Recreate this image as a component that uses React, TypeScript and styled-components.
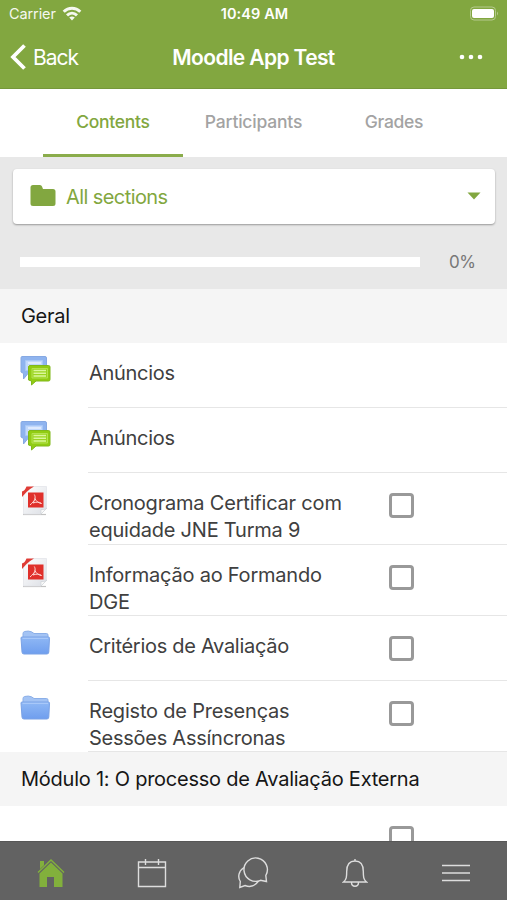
import React from "react";
import styled, { createGlobalStyle } from "styled-components";

const Global = createGlobalStyle`
  * { box-sizing: border-box; }
  body { margin: 0; background: #fff; font-family: Inter, "Liberation Sans", sans-serif; }
`;

const Screen = styled.div`
  width: 507px; height: 900px; overflow: hidden;
  display: flex; flex-direction: column; background: #fff;
`;
const Header = styled.header`
  height: 89px; flex: none; background: #82a740; color: #fff;
  border-bottom: 1px solid #75983a; display: flex; flex-direction: column;
`;
const StatusBar = styled.div`
  height: 27px; display: grid; grid-template-columns: 1fr auto 1fr; align-items: center;
  padding: 0 7px 0 9px; font-size: 14.5px;
`;
const Carrier = styled.div`
  display: flex; align-items: center; gap: 6px; opacity: .92;
`;
const Label = styled.span<{ $ls?: number }>`
  letter-spacing: ${p => p.$ls ?? 0}px; white-space: nowrap;
`;
const Clock = styled.div`font-weight: 600; font-size: 14.5px;`;
const Battery = styled.div`display: flex; justify-content: flex-end;`;
const NavBar = styled.div`
  height: 60px; display: grid; grid-template-columns: 1fr auto 1fr; align-items: center;
  padding: 0 24px 0 10px;
`;
const Back = styled.div`display: flex; align-items: center; gap: 7px; font-size: 21px;`;
const Title = styled.h1`margin: 0; font-size: 21px; font-weight: 600; padding-left: 14px;`;
const More = styled.div`display: flex; justify-content: flex-end;`;

const Tabs = styled.nav`
  height: 68px; flex: none; display: grid; grid-template-columns: repeat(3, 140.5px);
  justify-content: center;
`;
const Tab = styled.div<{ $active?: boolean }>`
  display: flex; align-items: center; justify-content: center; height: 68px;
  font-size: 17.5px; font-weight: 500;
  color: ${p => (p.$active ? "#82a740" : "#a3a3a3")};
  border-bottom: 3px solid ${p => (p.$active ? "#8aac4b" : "transparent")};
`;

const Controls = styled.section`
  height: 132px; flex: none; background: #e8e8e8; padding: 12px 12px 0 13px;
`;
const Selector = styled.div`
  height: 55px; background: #fff; border-radius: 4px; box-shadow: 0 1px 2px rgba(0,0,0,.35);
  display: flex; align-items: center; padding: 0 14px 2px 17px; color: #82a740; font-size: 20px;
`;
const SelectorText = styled.div`flex: 1; padding: 2px 0 0 10px;`;
const Progress = styled.div`
  display: flex; align-items: center; height: 76px; padding-left: 7px; color: #777; font-size: 17px;
`;
const Track = styled.div`width: 400px; height: 10px; background: #fff; margin-right: 29px;`;

const SectionTitle = styled.h2`
  margin: 0; flex: none; height: 54px; background: #f5f5f5; padding: 0 21px;
  display: flex; align-items: center; font-size: 20px; font-weight: 400; color: #161616;
`;
const List = styled.div`display: flex; flex-direction: column; flex: none;`;
const Row = styled.div<{ $h: number }>`
  height: ${p => p.$h}px; flex: none; display: flex; padding-left: 20px; overflow: hidden;
`;
const IconCell = styled.div`width: 68px; padding-top: 12px; flex: none;`;
const RowBody = styled.div`
  flex: 1; display: flex; border-bottom: 1px solid #e6e6e6; padding: 17px 0 0 1px;
`;
const RowText = styled.div`
  width: 300px; font-size: 20px; line-height: 27px; color: #404040; 
  display: flex; flex-direction: column;
`;
const Check = styled.div`
  width: 25px; height: 25px; border: 3px solid #999; border-radius: 4px; margin-top: 3px;
`;
const Content = styled.main`flex: 1; min-height: 0; overflow: hidden; display: flex; flex-direction: column;`;
const TabBar = styled.footer`
  height: 59px; flex: none; background: #626262; display: grid; grid-template-columns: repeat(5, 1fr);
  place-items: center; padding-top: 4px; border-top: 1px solid #575757;
`;

const Forum = () => (
  <svg width="32" height="32" viewBox="0 0 32 32">
    <path d="M2 1.500h23q1.500 0 1.500 1.500v14q0 1.500-1.500 1.500H8L3.500 24v-5.500L1 17V3q0-1.500 1-1.500z" fill="#8fb4ef" stroke="#86a9e3" />
    <path d="M5.500 5.500h17v10h-17z" fill="#c1d8fb" stroke="#a8c8f7" />
    <path d="M8 8h13M8 11h13M8 14h13" stroke="#e7f0ff" strokeWidth="1.500" />
    <path d="M10 10.500h18.500q1.500 0 1.500 1.500v12.500q0 1.500-1.500 1.500H16l-4.500 4v-4L8.500 25V12q0-1.500 1.500-1.500z" fill="#91cc12" stroke="#80b81b" />
    <path d="M12 13.500h15.500v9.500H12z" fill="#9bd420" stroke="#b4e250" />
    <path d="M13.500 15.500H26M13.500 18.300H26M13.500 21H26" stroke="#dcf79c" strokeWidth="1.500" />
  </svg>
);
const Pdf = () => (
  <svg width="32" height="32" viewBox="0 0 32 32">
    <defs><linearGradient id="paper" x1="0" y1="0" x2="1" y2="1">
      <stop offset="0" stopColor="#fff" /><stop offset="1" stopColor="#dcdfe5" />
    </linearGradient></defs>
    <path d="M3 29.500h23" stroke="#c2c2c2" strokeWidth="1.200" />
    <path d="M12 1.500h14.500V23l-5.500 6H3.500V10z" fill="url(#paper)" stroke="#e3e5ea" strokeWidth=".8" />
    <path d="M21 29v-4.500q3 1 6-1.500z" fill="#fafafa" stroke="#cfd2d7" strokeWidth=".7" />
    <path d="M6.500 1.500H14Q9.500 4 6.500 7L2 12V6.500q2.500-1 3.300-2.500z" fill="#df3c36" />
    <rect x="8" y="7.500" width="15.500" height="15" fill="#e0302b" />
    <path d="M14.300 9.500c1.700 3 1 6-4.300 10.500M15.500 14.500c-1.500 1.500-2 2.500-2.500 3.500 3-1 6-1.500 8.500.5M15 13.500c1 2.500 3 4.500 6.500 5" fill="none" stroke="#ffd9d5" strokeWidth="1" />
  </svg>
);
const Folder = () => (
  <svg width="32" height="34" viewBox="0 -1.500 32 34">
    <defs><linearGradient id="folder" x1="0" y1="0" x2="0" y2="1">
      <stop offset="0" stopColor="#8fb8f5" /><stop offset="1" stopColor="#6f9eee" />
    </linearGradient></defs>
    <path d="M3 9V4q0-1.500 1.500-2 4-1 7 .3l2.500 1.700H26.500q1.500 0 1.500 1.500V10z" fill="#a3c3f4" stroke="#8bafe8" />
    <path d="M2 7.500h26.500q1 0 1 1.200L28.800 22.500q0 2-2 2H4q-2 0-2-2L1 8.500q0-1 1-1z" fill="url(#folder)" stroke="#7aa2e6" />
    <path d="M2.500 8.800h25.500" stroke="#b0cdfa" />
  </svg>
);

const Wifi = () => (
  <svg width="20" height="16" viewBox="0 0 20 16" fill="none" stroke="#fff" strokeWidth="3">
    <path d="M1.700 5.700c4.700-4.600 11.900-4.600 16.600 0" /><path d="M5 9.300c2.900-2.800 7.100-2.800 10 0" />
    <path d="M10 14.600l-2.800-3q2.800-2.300 5.600 0z" fill="#fff" stroke="none" />
  </svg>
);

type Item = { icon: () => React.ReactElement; lines: [string, number][]; h: number; check?: boolean };
const items: Item[] = [
  { icon: Forum, lines: [["Anúncios", -0.3]], h: 65 },
  { icon: Forum, lines: [["Anúncios", -0.3]], h: 65 },
  { icon: Pdf, lines: [["Cronograma Certificar com", -0.2], ["equidade JNE Turma 9", -0.22]], h: 72, check: true },
  { icon: Pdf, lines: [["Informação ao Formando", -0.22], ["DGE", -0.2]], h: 71, check: true },
  { icon: Folder, lines: [["Critérios de Avaliação", -0.29]], h: 65, check: true },
  { icon: Folder, lines: [["Registo de Presenças", -0.2], ["Sessões Assíncronas", -0.26]], h: 71, check: true },
];

const ItemRow = ({ icon: Icon, lines, h, check }: Item) => (
  <Row $h={h}>
    <IconCell><Icon /></IconCell>
    <RowBody>
      <RowText>{lines.map(([t, ls]) => <Label key={t} $ls={ls}>{t}</Label>)}</RowText>
      {check && <Check />}
    </RowBody>
  </Row>
);

export default function App() {
  return (
    <Screen>
      <Global />
      <Header>
        <StatusBar>
          <Carrier><Label $ls={-0.1}>Carrier</Label><Wifi /></Carrier>
          <Clock><Label $ls={0.1}>10:49 AM</Label></Clock>
          <Battery>
            <svg width="31" height="15" viewBox="0 0 31 15">
              <rect x="1.500" y="1" width="25" height="13" rx="3.500" fill="none" stroke="#b5ca8d" />
              <rect x="3" y="3" width="22" height="9" rx="2" fill="#fff" />
              <path d="M28 5.500q2 2 0 4z" fill="#b5ca8d" />
            </svg>
          </Battery>
        </StatusBar>
        <NavBar>
          <Back>
            <svg width="16" height="26" viewBox="0 0 16 26"><path d="M14.500 1.500L3 13l11.500 11.500" fill="none" stroke="#fff" strokeWidth="3.800" /></svg>
            <Label $ls={-1}>Back</Label>
          </Back>
          <Title><Label $ls={-0.62}>Moodle App Test</Label></Title>
          <More><svg width="24" height="6" viewBox="0 0 24 6" fill="#fff"><circle cx="3" cy="3" r="2.300" /><circle cx="12" cy="3" r="2.300" /><circle cx="21" cy="3" r="2.300" /></svg></More>
        </NavBar>
      </Header>
      <Tabs>
        <Tab $active><Label $ls={-0.3}>Contents</Label></Tab>
        <Tab><Label $ls={-0.2}>Participants</Label></Tab>
        <Tab><Label $ls={-0.3}>Grades</Label></Tab>
      </Tabs>
      <Controls>
        <Selector>
          <svg width="26" height="22" viewBox="0 0 26 22"><path d="M3 0h7q1.500 0 2 1.500l1 2.500H23q2.500 0 2.500 2.500v12q0 2.500-2.500 2.500H3Q.5 21 .5 18.500v-16Q.5 0 3 0z" fill="#82a740" /></svg>
          <SelectorText><Label $ls={-0.58}>All sections</Label></SelectorText>
          <svg width="14" height="8" viewBox="0 0 14 8"><path d="M.5.5h13L7 7.500z" fill="#82a740" /></svg>
        </Selector>
        <Progress><Track /><Label $ls={-0.5}>0%</Label></Progress>
      </Controls>
      <Content>
        <SectionTitle><Label $ls={-0.3}>Geral</Label></SectionTitle>
        <List>{items.map((it, i) => <ItemRow key={i} {...it} />)}</List>
        <SectionTitle><Label $ls={-0.24}>Módulo 1: O processo de Avaliação Externa</Label></SectionTitle>
        <Row $h={72}><IconCell /><RowBody><RowText /><Check /></RowBody></Row>
      </Content>
      <TabBar>
        <svg width="28" height="30" viewBox="0 0 28 30" fill="#82b03c"><path d="M3 3h4v4.200L3 11zM14 1L.5 14l1 1L14 3l12.500 12 1-1z" /><path d="M14 4.500L2.500 15.500V29H10V19h7v10h8.500V15.500z" /></svg>
        <svg width="30" height="30" viewBox="0 0 30 30" fill="none" stroke="#ddd" strokeWidth="1.400"><path d="M1.500 4h27v24.500h-27zM1.500 9.500h27M8.500 1v6M21.500 1v6" /></svg>
        <svg width="32" height="32" viewBox="0 0 32 32" fill="none" stroke="#ddd" strokeWidth="1.400"><path d="M29.500 24.500L28.800 18.500A11.700 11.700 0 1 0 23.500 23.300z" /><path d="M7 10.500C1.500 14 .5 20 3.300 24.500L2.800 30.500 8 28.500C13 30.500 18 29 21.500 24" /></svg>
        <svg width="26" height="30" viewBox="0 0 26 30" fill="none" stroke="#ddd" strokeWidth="1.400"><path d="M1.500 24h23c-3-2.500-3.200-5-3.200-10.500C21.300 6.500 18.500 3 13 3S4.700 6.500 4.700 13.500C4.700 19 4.500 21.500 1.500 24zM9.500 24.500c0 5 7 5 7 0M13 1v2" /></svg>
        <svg width="28" height="20" viewBox="0 0 28 20" stroke="#ddd" strokeWidth="1.500"><path d="M0 2.500h28M0 10h28M0 17.500h28" /></svg>
      </TabBar>
    </Screen>
  );
}
